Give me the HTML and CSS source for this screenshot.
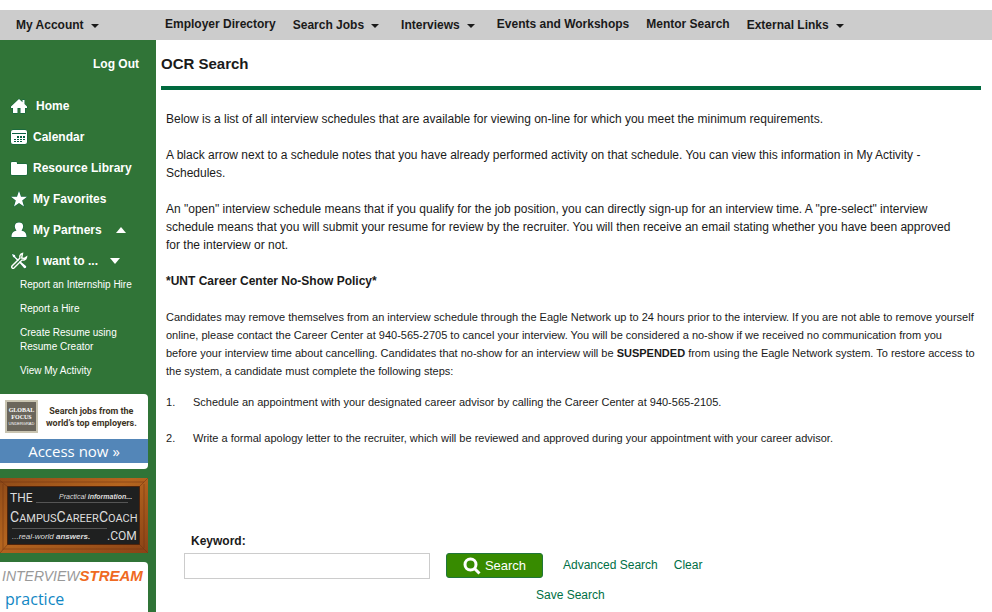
FILE: index.html
```html
<!DOCTYPE html>
<html lang="en">
<head>
<meta charset="utf-8">
<title>OCR Search</title>
<link rel="stylesheet" href="styles.css">
</head>
<body>
<header class="topbar">
  <div class="account"><a class="drop" href="#">My Account</a></div>
  <nav class="menu">
    <a href="#">Employer Directory</a>
    <a class="drop" href="#">Search Jobs</a>
    <a class="drop" href="#">Interviews</a>
    <a href="#">Events and Workshops</a>
    <a href="#">Mentor Search</a>
    <a class="drop" href="#">External Links</a>
  </nav>
</header>
<div class="page">
  <aside class="sidebar">
    <a class="logout" href="#">Log Out</a>
    <nav class="side-nav">
      <a class="wide" href="#">
        <svg class="icon" viewBox="0 0 18 18"><path d="M9 2 1 9.500V11h2v5h4.500v-5h3v5H15v-5h2V9.500L14.500 7V3h-2v2.200z"/></svg>Home</a>
      <a href="#">
        <svg class="icon" viewBox="0 0 18 18"><path d="M3 2h12q2 0 2 2v10q0 2-2 2H3q-2 0-2-2V4q0-2 2-2z"/><path class="cells" d="M2 5h14v1H2zM7 8h2v2H7zm3 0h2v2h-2zm3 0h2v2h-2zM4 11h2v1H4zm3 0h2v1H7zm3 0h2v1h-2zm3 0h2v1h-2zM4 13h2v1H4zm3 0h2v1H7zm3 0h2v1h-2z"/></svg>Calendar</a>
      <a href="#">
        <svg class="icon" viewBox="0 0 18 18"><path d="M1 4q0-1 1-1h4q1 0 1 1v1h9q1 0 1 1v9q0 1-1 1H2q-1 0-1-1z"/></svg>Resource Library</a>
      <a href="#">
        <svg class="icon" viewBox="0 0 18 18"><path d="m9 1 2 5.800h6l-4.800 3.700 1.800 6-5-3.600-5 3.600 1.800-6L1 6.800h6z"/></svg>My Favorites</a>
      <a href="#">
        <svg class="icon" viewBox="0 0 18 18"><path d="M9 1.500c5 0 5 5 2.500 8 3 1 5 2 5 6.500h-15c0-4.500 2-5.500 5-6.500C4 6.500 4 1.500 9 1.500z"/></svg>My Partners<span class="caret up"></span></a>
      <a class="wide" href="#">
        <svg class="icon" viewBox="0 0 18 18"><path d="m2 2 3 1 .5 2L9 8l-1.200 1.200-3.300-3.500L3 5z"/><path d="m10 9 6 5c1 1-.8 3-2 2l-5-5.800z"/><path class="wrench" d="M12.500 1.500c-2.500.500-3 2.500-2.500 4.500l-8 8c-1 1.500.800 3 2 2l8-8c2 .5 4-.3 4.500-3L14 6.500 11.700 6 12 4z"/></svg>I want to ...<span class="caret down"></span></a>
    </nav>
    <nav class="sub-nav">
      <a href="#">Report an Internship Hire</a>
      <a href="#">Report a Hire</a>
      <a href="#">Create Resume using Resume Creator</a>
      <a href="#">View My Activity</a>
    </nav>
    <div class="banners">
      <a class="banner focus" href="#">
        <span class="focus-top">
          <span class="focus-logo"><b>GLOBAL</b><b>FOCUS</b><small>UNDERGRAD</small></span>
          <span class="focus-text">Search jobs from the<br>world’s top employers.</span>
        </span>
        <span class="focus-cta">Access now »</span>
      </a>
      <a class="banner coach" href="#">
        <svg viewBox="0 0 148 75" role="img" aria-label="The Campus Career Coach">
          <defs>
            <linearGradient id="wood" x1="0" y1="0" x2="1" y2="1"><stop offset="0" stop-color="#8f4a18"/><stop offset=".45" stop-color="#b5651f"/><stop offset="1" stop-color="#8a4316"/></linearGradient>
          </defs>
          <path fill="url(#wood)" d="M0 0h148v75H0z"/>
          <path d="M-3 0 8 9M148 0l-9 9M0 75l8-9m140 9-9-9M0 4h144M2 71h142M3 6v64M144 6v64" stroke="#6d3210" fill="none" opacity=".5"/>
          <path fill="#1f2020" stroke="#4e230b" d="M7.500 8.500h132v58h-132z"/>
          <path d="M36 24.500h92M12 50.500h95" stroke="#555"/>
          <g class="chalk">
            <text x="10" y="24" font-size="12">THE</text>
            <text x="10" y="44" font-size="14">C<tspan font-size="11">AMPUS</tspan>C<tspan font-size="11">AREER</tspan>C<tspan font-size="11">OACH</tspan></text>
            <text x="107" y="62" font-size="12">.COM</text>
          </g>
          <g class="script">
            <text x="59" y="21" font-size="7">Practical <tspan font-weight="bold">information...</tspan></text>
            <text x="12" y="61" font-size="8">...real-world <tspan font-weight="bold">answers.</tspan></text>
          </g>
        </svg>
      </a>
      <a class="banner stream" href="#">
        <span class="stream-name">INTERVIEW<b>STREAM</b></span>
        <span class="stream-sub">practice</span>
      </a>
    </div>
  </aside>
  <main class="content">
    <h1>OCR Search</h1>
    <section class="intro">
      <p>Below is a list of all interview schedules that are available for viewing on-line for which you meet the minimum requirements.</p>
      <p>A black arrow next to a schedule notes that you have already performed activity on that schedule. You can view this information in My Activity - Schedules.</p>
      <p>An "open" interview schedule means that if you qualify for the job position, you can directly sign-up for an interview time. A "pre-select" interview schedule means that you will submit your resume for review by the recruiter. You will then receive an email stating whether you have been approved for the interview or not.</p>
      <h2>*UNT Career Center No-Show Policy*</h2>
      <div class="policy">
        <p>Candidates may remove themselves from an interview schedule through the Eagle Network up to 24 hours prior to the interview. If you are not able to remove yourself<br>online, please contact the Career Center at 940-565-2705 to cancel your interview. You will be considered a no-show if we received no communication from you<br>before your interview time about cancelling. Candidates that no-show for an interview will be <strong>SUSPENDED</strong> from using the Eagle Network system. To restore access to<br>the system, a candidate must complete the following steps:</p>
        <ol>
          <li>Schedule an appointment with your designated career advisor by calling the Career Center at 940-565-2105.</li>
          <li>Write a formal apology letter to the recruiter, which will be reviewed and approved during your appointment with your career advisor.</li>
        </ol>
      </div>
    </section>
    <form class="search">
      <label for="keyword">Keyword:</label>
      <div class="search-row">
        <input id="keyword" type="text">
        <button type="button"><svg viewBox="0 0 18 18"><circle cx="7.500" cy="7.500" r="5.500"/><path d="m11.500 11.500 5 5"/></svg>Search</button>
        <a href="#">Advanced Search</a>
        <a href="#">Clear</a>
      </div>
      <a class="save" href="#">Save Search</a>
    </form>
  </main>
</div>
</body>
</html>
```
FILE: styles.css
```css
* { box-sizing: border-box; }
body {
  margin: 0;
  min-height: 100vh;
  padding-top: 10px;
  display: flex;
  flex-direction: column;
  font: 12px/18px "Liberation Sans", Arial, sans-serif;
  color: #1a1a1a;
  background: #fff;
}
a { color: inherit; text-decoration: none; }
p, h1, h2, ol { margin: 0; padding: 0; }

.topbar {
  display: flex;
  height: 30px;
  background: #ccc;
  font-size: 12px;
  line-height: 28px;
  font-weight: bold;
  white-space: nowrap;
}
.account { width: 165px; padding-left: 16px; flex: none; }
.menu { display: flex; gap: 17px; }
.drop { display: inline-block; padding: 1px 5px 0 0; }
.drop::after {
  content: "";
  display: inline-block;
  margin-left: 7px;
  border: 4px solid transparent;
  border-top-color: #1a1a1a;
  border-bottom: 0;
  vertical-align: 1px;
}

.page { display: flex; flex: 1; }
.sidebar {
  width: 156px;
  flex: none;
  display: flex;
  flex-direction: column;
  background: #307437;
  color: #fff;
}
.logout { align-self: flex-end; padding: 15px 17px 17px 0; font-weight: bold; }
.side-nav { display: flex; flex-direction: column; font-weight: bold; }
.side-nav a { display: flex; align-items: center; height: 31px; padding-left: 10px; gap: 5px; }
.side-nav .wide { gap: 8px; }
.icon { width: 18px; height: 18px; fill: #fff; stroke: #096044; stroke-width: 1; paint-order: stroke; }
.cells { fill: #096044; stroke: none; }
.wrench { fill: none; stroke: #fff; stroke-width: 1.4; }
.caret { margin-left: 9px; border: 6px solid transparent; border-left-width: 5px; border-right-width: 5px; }
.up { border-bottom-color: #fff; border-top: 0; }
.down { border-top-color: #fff; border-bottom: 0; margin-left: 4px; }
.sub-nav {
  display: flex;
  flex-direction: column;
  gap: 10px;
  padding: 2px 16px 16px 20px;
  font-size: 10px;
  line-height: 14px;
}

.banners { display: flex; flex-direction: column; gap: 9px; width: 148px; flex: 1; }
.banner { display: block; }
.focus { height: 75px; background: #fff; border-radius: 0 4px 4px 0; }
.focus-top { display: flex; height: 45px; align-items: center; gap: 8px; padding-left: 5px; }
.focus-logo {
  display: flex;
  flex-direction: column;
  justify-content: center;
  align-items: center;
  width: 33px;
  height: 33px;
  flex: none;
  border: 2px solid #c9c4b1;
  background: #6b665c;
  color: #fff;
  font: 6px/7px "Liberation Serif", serif;
}
.focus-logo small { font: 4px/5px "Liberation Sans", sans-serif; }
.focus-text {
  color: #3d3425;
  font: bold 9px/12px Roboto, sans-serif;
  text-align: center;
  white-space: nowrap;
}
.focus-cta {
  display: block;
  background: #5386b8;
  font: 15px/24px "Open Sans", sans-serif;
  text-align: center;
  color: #fff;
}
.coach { height: 75px; }
.coach svg { display: block; width: 100%; height: 100%; }
.chalk { fill: #ddd; font-family: Roboto, sans-serif; }
.script { fill: #ddd; font-family: "Liberation Sans", sans-serif; font-style: italic; }
.stream { flex: 1; background: #fff; border-radius: 0 4px 0 0; padding: 5px 2px 0; white-space: nowrap; }
.stream-name { display: block; color: #999; font: italic 14px/18px "Liberation Sans", sans-serif; }
.stream-name b { color: #ef6a22; font-size: 15px; }
.stream-sub { display: block; padding-left: 3px; color: #1287c4; font: 16px/28px "Open Sans", sans-serif; }

.content { flex: 1; min-width: 0; padding: 0 11px 0 5px; }
h1 { padding: 14px 0 12px; border-bottom: 4px solid #00693e; font-size: 15px; line-height: 20px; }
.intro { display: flex; flex-direction: column; gap: 18px; padding: 20px 0 0 5px; }
.intro > p { padding-right: 14px; }
h2 { font-size: 12px; line-height: 18px; }
.policy { font-size: 11px; }
ol { list-style: none; counter-reset: step; margin-top: 13px; display: flex; flex-direction: column; gap: 18px; }
li { display: flex; counter-increment: step; }
li::before { content: counter(step) "."; width: 27px; flex: none; }

.search { padding: 85px 0 0 23px; color: #006f45; }
.search label { display: block; padding-left: 7px; font-weight: bold; color: #1a1a1a; }
.search-row { display: flex; align-items: flex-start; margin-top: 3px; gap: 16px; line-height: 24px; }
.search input { width: 246px; height: 26px; margin: 0; border: 1px solid #ccc; background: #fff; font: inherit; }
.search button {
  display: flex;
  align-items: center;
  justify-content: center;
  gap: 4px;
  width: 97px;
  height: 25px;
  margin: 0 4px 0 0;
  padding: 0;
  border: 1px solid #20763a;
  border-radius: 3px;
  background: #378b00;
  color: #fff;
  font: 13px/18px "Liberation Sans", Arial, sans-serif;
}
.search button svg { width: 18px; height: 18px; fill: none; stroke: #fff; stroke-width: 3; }
.save { display: inline-block; margin: 7px 0 0 352px; }
```
